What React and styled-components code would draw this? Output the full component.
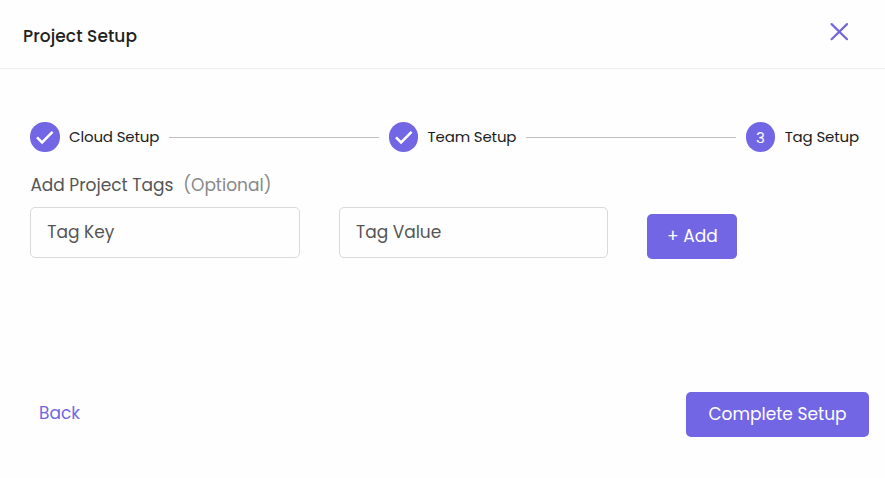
import React from "react";
import styled, { createGlobalStyle } from "styled-components";

const Global = createGlobalStyle`
  * { box-sizing: border-box; }
  body { margin: 0; background: #fefefe; font-family: Poppins, Inter, "Open Sans", sans-serif; overflow: hidden; }
  button { font-family: inherit; }
`;
const Dialog = styled.main`
  width: 885px; height: 478px; display: flex; flex-direction: column; background: #fefefe;
`;
const Header = styled.header`
  height: 69px; display: flex; justify-content: space-between; padding: 22px 36px 0 23px;
  border-bottom: 1px solid #eeeeee;
`;
const Text = styled.span`
  display: block; white-space: nowrap; width: max-content;
  font-size: ${p => p.$size}px; line-height: 28px; font-weight: ${p => p.$weight || 400};
  color: ${p => p.$color || "#222"}; letter-spacing: ${p => p.$track || 0}px;
`;
const StepText = styled(Text)`
  font-size: 15px; color: #1c1c1c; letter-spacing: -0.15px;
`;
const CloseButton = styled.button`
  width: 20px; height: 20px; padding: 0; border: 0; background: none; display: flex;
`;
const Stepper = styled.div`
  display: flex; align-items: center; height: 30px; margin: 53px 26px 0 30px;
`;
const Badge = styled.span`
  width: 29.5px; height: 29.5px; border-radius: 50%; background: #7266e4; color: #fff;
  display: grid; place-items: center; font-size: 15px; line-height: 29px; margin-right: 9.5px; flex: none;
`;
const Connector = styled.span`
  flex: 1; height: 1px; background: #c0c0c0; margin: 0 10px;
`;
const Label = styled.div`
  display: flex; gap: 10px; margin: 19px 0 0 30.4px; height: 28px;
`;
const Fields = styled.div`
  display: flex; margin: 8px 0 0 30px; height: 51px; gap: 39px;
`;
const Field = styled.div`
  width: 269.7px; height: 51px; border: 1px solid #dadada; border-radius: 5px; padding: 10px 16.3px;
`;
const Button = styled.button`
  width: ${p => p.$w}px; height: 45px; border: 0; border-radius: 5px; background: #7266e4;
  padding: 0 0 1px; display: flex; align-items: center; justify-content: center; flex: none;
`;
const AddSlot = styled.div` padding-top: 7px; `;
const Footer = styled.footer`
  display: flex; justify-content: space-between; margin: 133.5px 16px 0 39px; height: 45px;
`;
const BackLink = styled.div` padding-top: 7px; `;

const Check = () => (
  <svg width="29" height="29" viewBox="0 0 29 29" fill="none" stroke="#fff" strokeWidth="2.5"><path d="M7 14.3l5.1 5.1L22.6 8.9" /></svg>
);

export default function App() {
  return (
    <Dialog>
      <Global />
      <Header>
        <Text $size={17} $weight={500} $track={0.08}>Project Setup</Text>
        <CloseButton aria-label="Close">
          <svg width="20" height="20" viewBox="0 0 20 20" stroke="#7266e4" strokeWidth="2.2" strokeLinecap="round"><path d="M2.6 2.1L18 17.2M18 2.1L2.6 17.2" /></svg>
        </CloseButton>
      </Header>
      <Stepper>
        <Badge><Check /></Badge><StepText>Cloud Setup</StepText>
        <Connector />
        <Badge><Check /></Badge><StepText>Team Setup</StepText>
        <Connector />
        <Badge>3</Badge><StepText>Tag Setup</StepText>
      </Stepper>
      <Label>
        <Text $size={17} $color="#555">Add Project Tags</Text>
        <Text $size={17} $color="#888">(Optional)</Text>
      </Label>
      <Fields>
        <Field><Text $size={17} $color="#555">Tag Key</Text></Field>
        <Field><Text $size={17} $color="#555">Tag Value</Text></Field>
        <AddSlot><Button $w={90}><Text $size={17} $color="#fff">+ Add</Text></Button></AddSlot>
      </Fields>
      <Footer>
        <BackLink><Text $size={17} $color="#7266e4">Back</Text></BackLink>
        <Button $w={183}><Text $size={17} $color="#fff">Complete Setup</Text></Button>
      </Footer>
    </Dialog>
  );
}
